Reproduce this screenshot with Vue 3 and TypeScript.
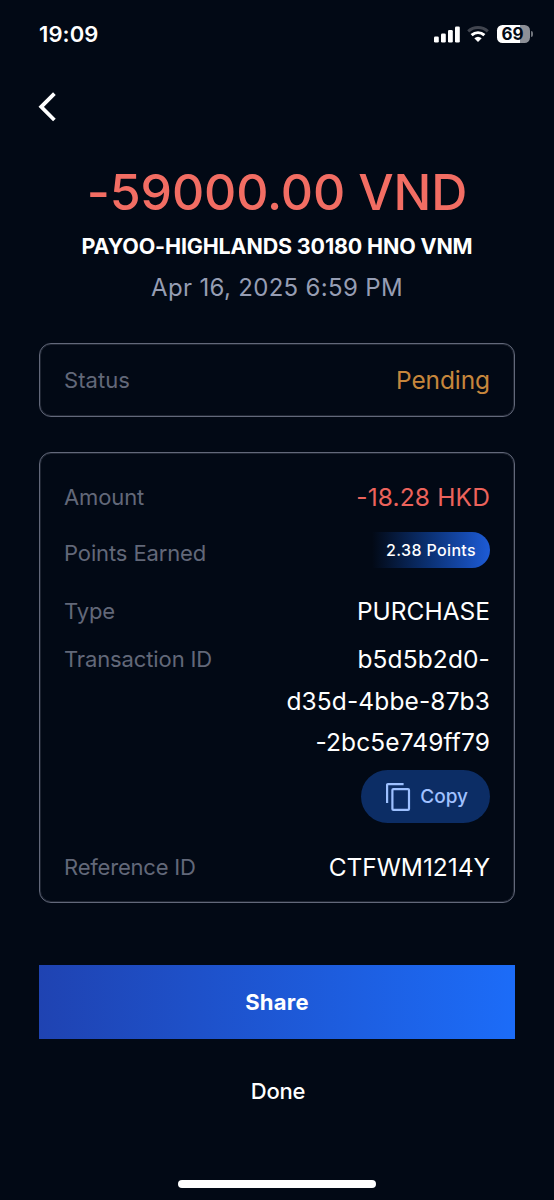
<script setup lang="ts">
const status = { label: 'Status', value: 'Pending' }
const idLines: string[] = ['b5d5b2d0-', 'd35d-4bbe-87b3', '-2bc5e749ff79']
</script>

<template>
  <main class="screen">
    <header class="statusbar">
      <span class="clock">19:09</span>
      <div class="indicators">
        <svg class="signal" width="26" height="17" viewBox="0 0 26 17" fill="#fff">
          <rect x="0" y="10.5" width="4.8" height="6" rx="1.3" />
          <rect x="7" y="7.5" width="4.8" height="9" rx="1.3" />
          <rect x="14" y="4" width="4.8" height="12.5" rx="1.3" />
          <rect x="21" y="0.5" width="4.8" height="16" rx="1.3" />
        </svg>
        <svg class="wifi" width="22" height="16" viewBox="0 0 22 16">
          <path d="M1.2 5.3C6.8 0.3 15.2 0.3 20.8 5.3" fill="none" stroke="#41454f" stroke-width="3" />
          <path d="M4.6 9.2C8.4 5.9 13.6 5.9 17.4 9.2" fill="none" stroke="#fff" stroke-width="3.1" />
          <path d="M7.3 12.2Q11 9.2 14.7 12.2L11 15.9Z" fill="#fff" />
        </svg>
        <div class="battery">
          <span class="cell">69</span>
          <span class="tip"></span>
        </div>
      </div>
    </header>

    <nav class="nav">
      <svg width="20" height="32" viewBox="0 0 20 32" fill="none" stroke="#fff" stroke-width="3.8">
        <path d="M16.4 2.6L3.2 15.8L16.4 29" />
      </svg>
    </nav>

    <section class="summary">
      <h1 class="total">-59000.00 VND</h1>
      <p class="merchant">PAYOO-HIGHLANDS 30180 HNO VNM</p>
      <p class="date">Apr 16, 2025 6:59 PM</p>
    </section>

    <section class="card status-card">
      <span class="label l-status">{{ status.label }}</span>
      <span class="value pending">{{ status.value }}</span>
    </section>

    <section class="card details">
      <div class="row r-amount">
        <span class="label l-amount">Amount</span>
        <span class="value negative">-18.28 HKD</span>
      </div>
      <div class="row r-points">
        <span class="label l-points">Points Earned</span>
        <span class="points">2.38 Points</span>
      </div>
      <div class="row r-type">
        <span class="label l-type">Type</span>
        <span class="value v-type">PURCHASE</span>
      </div>
      <div class="row r-id">
        <span class="label l-id">Transaction ID</span>
        <div class="idcol">
          <span v-for="line in idLines" :key="line" class="value idline">{{ line }}</span>
          <button class="copy">
            <svg width="26" height="30" viewBox="0 0 26 30" fill="none" stroke="#9dc0ff" stroke-width="2.2" stroke-linejoin="round">
              <path d="M2.1 21V2.9Q2.1 2.1 2.9 2.1H18.6" />
              <rect x="7.4" y="7.1" width="16.6" height="20.8" rx="1" />
            </svg>
            <span class="copy-text">Copy</span>
          </button>
        </div>
      </div>
      <div class="row r-ref">
        <span class="label l-ref">Reference ID</span>
        <span class="value v-ref">CTFWM1214Y</span>
      </div>
    </section>

    <button class="share">Share</button>
    <button class="done">Done</button>
    <div class="home"></div>
  </main>
</template>

<style>
html, body { margin: 0; background: #020915; }
</style>

<style scoped>
.screen {
  box-sizing: border-box;
  width: 554px;
  height: 1200px;
  padding: 0 39px;
  display: flex;
  flex-direction: column;
  overflow: hidden;
  background: #020915;
  color: #fff;
  font-family: Inter, "Liberation Sans", sans-serif;
  white-space: nowrap;
}
.statusbar { height: 68px; display: flex; align-items: center; justify-content: space-between; flex: none; }
.clock { font-size: 22px; font-weight: 600; line-height: 30px; letter-spacing: 0.1px; }
.indicators { display: flex; align-items: center; margin-right: -18px; }
.wifi { margin-left: 7px; }
.battery { display: flex; align-items: center; margin-left: 8px; }
.cell {
  width: 33px;
  height: 18px;
  border-radius: 5.5px;
  background: linear-gradient(90deg, #fff 69%, #8d9097 69%);
  color: #020915;
  font-size: 17px;
  font-weight: 700;
  line-height: 18px;
  text-indent: -2px;
  text-align: center;
}
.tip { width: 2px; height: 6px; margin-left: 1px; border-radius: 0 2px 2px 0; background: #70747c; }
.nav { height: 77px; flex: none; display: flex; align-items: center; margin-left: -1px; }
.nav svg { display: block; }
.summary { height: 198px; flex: none; text-align: center; }
.total { margin: 17px 0 0; font-size: 50px; font-weight: 500; line-height: 60px; letter-spacing: -0.12px; color: #f26d63; }
.merchant { margin: 10px 0 0; font-size: 21.5px; font-weight: 700; line-height: 29px; letter-spacing: -0.17px; }
.date { margin: 13px 0 0; font-size: 24px; line-height: 28px; letter-spacing: 0.33px; color: #969db3; }
.card { box-sizing: border-box; flex: none; border: 1px solid #62687a; box-shadow: inset 0 0 0 1px #1e2431; border-radius: 12px; padding: 0 24px; }
.status-card { height: 74px; display: flex; align-items: center; justify-content: space-between; }
.label { font-size: 22px; line-height: 30px; color: #626879; letter-spacing: -0.12px; }
.l-status { letter-spacing: 0.05px; }
.value { font-size: 24.5px; line-height: 30px; }
.pending { color: #c6863c; letter-spacing: -0.1px; }
.negative { color: #ec635c; letter-spacing: 0.15px; }
.details { height: 451px; margin-top: 35px; padding-top: 29px; }
.row { display: flex; justify-content: space-between; align-items: flex-start; }
.r-amount { height: 50px; }
.r-points { height: 64px; }
.r-points .label { margin-top: 6px; }
.points {
  box-sizing: border-box;
  width: 118px;
  height: 36px;
  padding-right: 14px;
  border-radius: 0 18px 18px 0;
  background: linear-gradient(90deg, #020915 0%, #0b3276 50%, #1d5bd6 100%);
  font-size: 16px;
  font-weight: 500;
  line-height: 36px;
  letter-spacing: 0.35px;
  text-align: right;
}
.r-type { height: 49px; }
.r-id { height: 207px; }
.l-id { margin-top: -1px; }
.l-ref { letter-spacing: -0.2px; }
.idcol { display: flex; flex-direction: column; align-items: flex-end; margin-top: -6px; }
.idline { line-height: 41.5px; letter-spacing: 0.12px; }
.v-ref { letter-spacing: -0.05px; }
.copy {
  box-sizing: border-box;
  width: 129px;
  height: 53px;
  margin-top: 6px;
  padding: 0 22px 0 24px;
  display: flex;
  align-items: center;
  justify-content: space-between;
  border: 0;
  border-radius: 27px;
  background: #0c2d65;
  color: #a0c1ff;
  font: 500 19px/26px Inter, sans-serif;
}
.copy svg, .copy-text { margin-top: 2px; }
.share {
  flex: none;
  height: 74px;
  margin-top: 62px;
  padding: 0;
  border: 0;
  background: linear-gradient(90deg, #1f43b2, #1c6cf8);
  color: #fff;
  font: 700 22px/30px Inter, sans-serif;
  letter-spacing: 0.25px;
}
.done { flex: none; height: 40px; margin-top: 32px; padding: 0 0 0 2px; border: 0; background: none; color: #fff; font: 500 22px/30px Inter, sans-serif; letter-spacing: -0.2px; }
.home { flex: none; align-self: center; width: 198px; height: 8px; margin-top: 69px; border-radius: 4px; background: #fff; }
</style>
